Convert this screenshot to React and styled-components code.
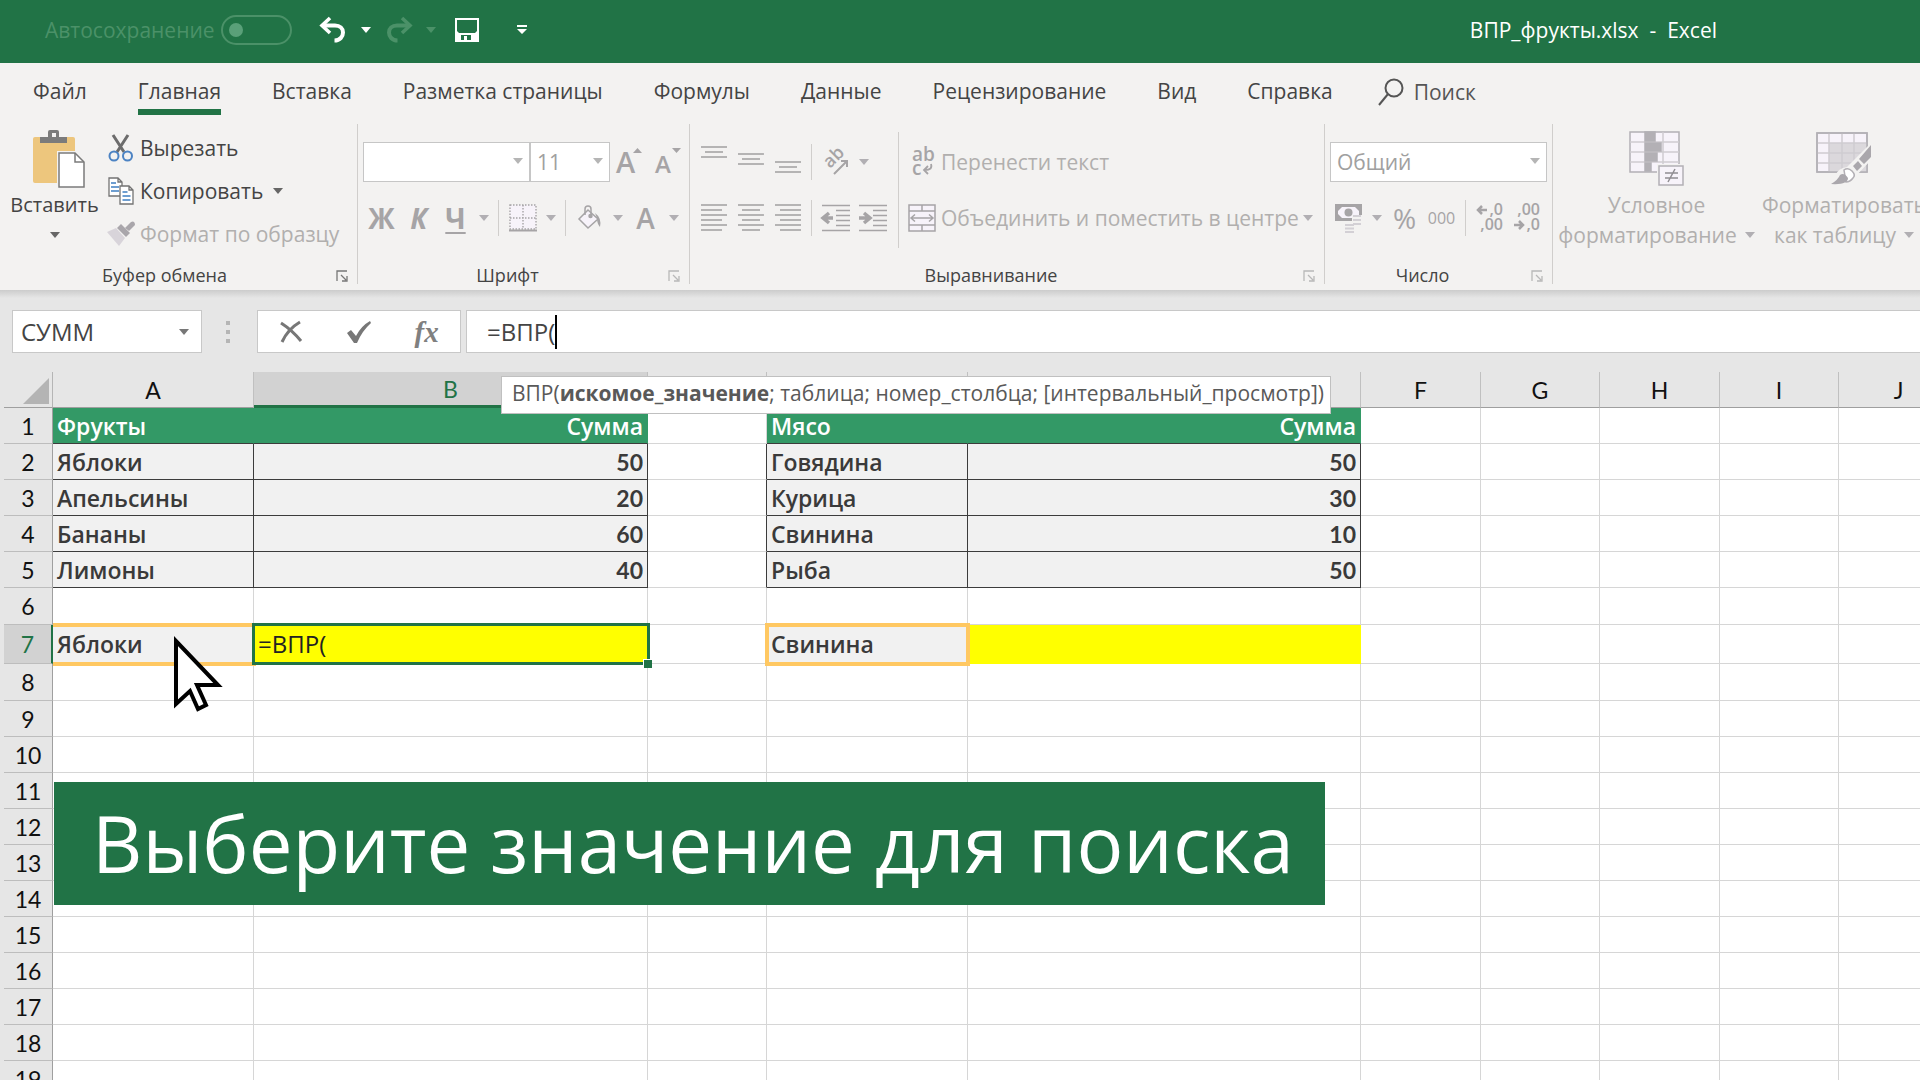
import React from 'react'
import styled, { createGlobalStyle, css } from 'styled-components'

const GlobalStyle = createGlobalStyle`
  * {
    box-sizing: border-box;
  }
  body {
    margin: 0;
    overflow: hidden;
    font-family: "Open Sans", "Noto Sans", sans-serif;
    color: #444444;
  }
  button, input, select {
    font: inherit;
    color: inherit;
    margin: 0;
    padding: 0;
    border: 0;
    background: none;
    border-radius: 0;
    opacity: 1;
  }
  svg {
    display: block;
    flex: none;
    overflow: visible;
  }
`

const GREEN = '#217346'
const OFF = '#a6a4a6'

/* ---------- icons ---------- */

const Caret = ({ color = '#666666' }) => (
  <svg width="10" height="6" viewBox="0 0 10 6" aria-hidden="true"><path d="M0 0h10L5 6z" fill={color} /></svg>
)

const UndoIcon = ({ flip, color }) => (
  <svg width="28" height="26" viewBox="0 0 28 26" fill="none" stroke={color} strokeWidth="4">
    <g transform={flip ? 'translate(28 0) scale(-1 1)' : undefined}>
      <path d="M11 1L3 8.500l8 7.500" strokeWidth="3.600" />
      <path d="M3 8.500h13c5 0 8 3 8 7s-3 8-8.500 8" />
    </g>
  </svg>
)

const SaveIcon = () => (
  <svg width="24" height="25" viewBox="0 0 24 25">
    <path d="M0 1h24v24H0z M2 3v11l2 2h16l2-2V3z M6 18v5h3v-4h3v4h4v-5z" fill="#fff" fillRule="evenodd" />
  </svg>
)

const CustomizeIcon = () => (
  <svg width="10" height="9" viewBox="0 0 10 9" fill="#fff"><path d="M0 0h10v2H0zM0 4h10L5 9z" /></svg>
)

const SearchIcon = () => (
  <svg width="26" height="28" viewBox="0 0 26 28" fill="none" stroke="#555" strokeWidth="2">
    <circle cx="16" cy="10" r="8.500" /><path d="M10 16L1 27" />
  </svg>
)

const PasteIcon = () => (
  <svg width="60" height="58" viewBox="-8 0 60 58">
    <rect x="0" y="7" width="42" height="46" rx="2" fill="#edc67d" />
    <path d="M7 13V7h8V2q0-2 2-2h7q2 0 2 2v5h8v6z" fill="#7b7b7b" />
    <rect x="19" y="3" width="4" height="4" fill="#f3f2f1" />
    <path d="M24 21h20l9 9v28H24z" fill="#f3f2f1" />
    <path d="M26 23h16l9 9v25H26z" fill="#fff" stroke="#7b7b7b" strokeWidth="1.500" />
    <path d="M42 23v9h9" fill="none" stroke="#7b7b7b" strokeWidth="1.500" />
  </svg>
)

const CutIcon = () => (
  <svg width="26" height="28" viewBox="0 0 26 28" fill="none">
    <path d="M5 1l11 17M20 1L9 18" stroke="#6c6c6c" strokeWidth="3" />
    <circle cx="6" cy="22" r="4.500" stroke="#4c83c3" strokeWidth="2" />
    <circle cx="19.500" cy="22" r="4.500" stroke="#4c83c3" strokeWidth="2" />
  </svg>
)

const CopyIcon = () => (
  <svg width="26" height="28" viewBox="0 0 26 28" fill="#fff" stroke="#737373" strokeWidth="1.300">
    <path d="M1 1h9l4 4v14H1zM10 1v4h4" />
    <path d="M3 6h5M3 10h8M3 14h8" stroke="#3f7fc1" />
    <path d="M12 9h9l4 4v14H12zM21 9v4h4" />
    <path d="M14.500 15h5M14.500 19h8M14.500 23h8" stroke="#3f7fc1" />
  </svg>
)

const PainterIcon = () => (
  <svg width="28" height="26" viewBox="0 0 28 26">
    <path d="M0 11l9-4 9 10-6 8z" fill="#d8d4da" />
    <path d="M10 7l4-4 9 9-4 4z" fill="#a9a6ab" />
    <path d="M18 7l6-6q2-1 3 0t1 3l-6 6z" fill="#a9a6ab" />
  </svg>
)

const GrowFont = ({ down }) => (
  <svg width="30" height="34" viewBox="0 0 30 34" fill={OFF} fontWeight="600">
    <text x={down ? 4 : 2} y="28" fontSize={down ? 24 : 29}>A</text>
    <path d={down ? 'M21 3h9l-4.500 5z' : 'M19 8h9l-4.500-5z'} />
  </svg>
)

const BordersIcon = () => (
  <svg width="28" height="28" viewBox="0 0 28 28" fill="none" stroke={OFF} strokeWidth="1.400">
    <path d="M1 1h26v24H1z" fill="#f7f3fa" strokeDasharray="1.500 1.500" />
    <path d="M14 1v24M1 14h26" strokeDasharray="1.500 1.500" /><path d="M0 26.500h28" strokeWidth="2" />
  </svg>
)

const FillIcon = () => (
  <svg width="24" height="26" viewBox="0 0 24 26" fill="none" stroke={OFF} strokeWidth="1.500">
    <path d="M10 5l10 9-10 9-9-9z" fill="#f7f3fa" />
    <path d="M7 10V4q0-3 3-3t3 3v7" />
    <circle cx="12.500" cy="11" r="1.500" fill={OFF} />
    <path d="M17 8q7 5 5 14-3-3-3-9z" fill={OFF} stroke="none" />
  </svg>
)

const Lines = ({ rows, width = 26 }) => (
  <svg width={width} height="28" viewBox={`0 0 ${width} 28`} stroke={OFF} strokeWidth="1.600">
    {rows.map(([y, x1, x2]) => <path key={y} d={`M${x1} ${y}H${x2}`} />)}
  </svg>
)

const OrientIcon = () => (
  <svg width="28" height="28" viewBox="0 0 28 28" fill="none">
    <text x="0" y="0" transform="translate(8 21) rotate(-45)" fontSize="18" fontWeight="600" fill={OFF}>ab</text>
    <path d="M12 26L25 13M19 13h6v6" stroke={OFF} strokeWidth="2" />
  </svg>
)

const IndentIcon = ({ right }) => (
  <svg width="28" height="28" viewBox="0 0 28 28" stroke={OFF} strokeWidth="1.600" fill="none">
    <path d="M0 1.500h28M14 6.500h14M14 11.500h14M14 16.500h14M14 21.500h14M0 26.500h28" />
    <path d={right ? 'M0 14h9M5 9l6 5-6 5' : 'M11 14H3M7 9l-6 5 6 5'} strokeWidth="3.500" />
  </svg>
)

const WrapIcon = () => (
  <svg width="28" height="30" viewBox="0 0 28 30">
    <g fill={OFF} fontSize="19" fontWeight="600">
      <text x="4" y="14">ab</text><text x="4" y="28">c</text>
    </g>
    <path d="M23 17q2 6-6 6M20 19l-4 4 4 4" fill="none" stroke={OFF} strokeWidth="1.800" />
  </svg>
)

const MergeIcon = () => (
  <svg width="28" height="28" viewBox="0 0 28 28" fill="none" stroke={OFF} strokeWidth="1.500">
    <path d="M1 1h26v26H1z" fill="#f7f3fa" />
    <path d="M1 7h26M1 21h26M14 1v6M14 21v6M3 14h22M7 10.500L3 14l4 3.500M21 10.500l4 3.500-4 3.500" />
  </svg>
)

const MoneyIcon = () => (
  <svg width="30" height="30" viewBox="0 0 30 30">
    <path d="M1 1h27v17H1z" fill={OFF} />
    <path d="M4 4h21v11H4z" fill="#f7f3fa" />
    <circle cx="14.500" cy="9.500" r="4" fill={OFF} />
    <path d="M4 4h4l-4 4zM25 4h-4l4 4zM4 15h4l-4-4z" fill={OFF} />
    <path d="M18 12h10v12H18z" fill="#f3f2f1" />
    <path d="M19 13h8M19 17h8M19 21h8M11 22h9M11 25.500h9M11 29h9" stroke="#d3d0d5" strokeWidth="2" />
  </svg>
)

const DecimalIcon = ({ less }) => (
  <svg width="30" height="30" viewBox="0 0 30 30" fill={OFF} fontSize="16" fontWeight="600">
    <text x="28" y="12" textAnchor="end">{less ? ',00' : ',0'}</text>
    <text x="28" y="27" textAnchor="end">{less ? ',0' : ',00'}</text>
    <path
      d={less ? 'M2 22h9M7 18l4 4-4 4' : 'M12 7H3M7 3L3 7l4 4'}
      fill="none" stroke={OFF} strokeWidth="2.500"
    />
  </svg>
)

const LauncherIcon = ({ color }) => (
  <svg width="12" height="12" viewBox="0 0 12 12" fill="none" stroke={color} strokeWidth="1.300">
    <path d="M1 11V1h10M5 5l5 5M11 6v5H6" />
  </svg>
)

const ConditionalIcon = () => (
  <svg width="56" height="56" viewBox="0 0 56 56" fill="none" stroke="#b3b0b5" strokeWidth="1.500">
    <path d="M1 1h49v40H1z" fill="#f7f3fa" />
    <path d="M1 11h49M1 21h49M1 31h49M34 1v40" stroke="#cfccd1" />
    <path d="M16 1h10v9H16zM16 12h16v8H16zM16 22h12v8H16zM16 32h6v8h-6z" fill="#b3b0b5" />
    <path d="M28 33h28v23H28z" fill="#f3f2f1" stroke="none" />
    <path d="M30 35h24v19H30z" fill="#f7f3fa" />
    <path d="M36 42h13M36 47h13M46 38l-7 13" stroke="#908d92" />
  </svg>
)

const TableStyleIcon = () => (
  <svg width="56" height="54" viewBox="0 0 56 54" fill="none" stroke="#b3b0b5" strokeWidth="1.500">
    <path d="M1 1h50v39H1z" fill="#f7f3fa" />
    <path d="M13 11h38v29H13z" fill="#dbd8dc" stroke="none" />
    <path d="M1 11h50M1 21h50M1 31h50M13 1v39M26 1v39M38 1v39" stroke="#cfccd1" />
    <path d="M1 1h50v39H1z" />
    <path d="M56 10v17L38 46q-4 9-14 8H10q6-3 9-10 3-8 12-9z" fill="#f3f2f1" stroke="none" />
    <path d="M55 13v12l-7 7-5-5zM42 29l4 5-5 5-4-5z" fill="#aaa7ac" stroke="none" />
    <path d="M28 38q4-3 8 1t1 7q-3 4-7 4z" fill="#fff" />
    <path d="M15 52q7-4 9-9 4-3 8 3 0 7-17 6z" fill="#aaa7ac" stroke="none" />
  </svg>
)

const CursorIcon = () => (
  <svg width="52" height="80" viewBox="0 0 52 80">
    <path d="M3 7v63l14-13 8 18 8-4-9-20h21z" fill="#fff" stroke="#000" strokeWidth="4" />
  </svg>
)

/* ---------- title bar ---------- */

const Window = styled.div`
  height: 100vh;
  display: flex;
  flex-direction: column;
  overflow: hidden;
  background: #e6e6e6;
`

const TitleBar = styled.header`
  flex: none;
  height: 63px;
  padding: 0 203px 4px 45px;
  display: flex;
  align-items: center;
  background: ${GREEN};
  color: #ffffff;
  font-size: 21px;
`

const AutoSave = styled.label`
  display: flex;
  align-items: center;
  gap: 6px;
  color: #4b9168;
`

const Switch = styled.input`
  appearance: none;
  width: 71px;
  height: 30px;
  border: 2px solid #4b9168;
  border-radius: 15px;
  display: flex;
  align-items: center;
  &::before {
    content: '';
    width: 14px;
    height: 14px;
    margin-left: 6px;
    border-radius: 50%;
    background: #5aa079;
  }
`

const QuickButtons = styled.div`
  display: flex;
  align-items: center;
  margin-left: 22px;
`

const QuickButton = styled.button`
  display: flex;
  align-items: center;
  justify-content: center;
  width: ${p => p.$width}px;
  height: 36px;
`

const Title = styled.h1`
  margin: 0 0 0 auto;
  font-size: 21px;
  font-weight: 400;
  white-space: pre;
`

/* ---------- ribbon ---------- */

const Tabs = styled.nav`
  flex: none;
  height: 57px;
  padding-left: 33px;
  display: flex;
  align-items: flex-start;
  gap: 51px;
  background: #f3f2f1;
`

const Tab = styled.a`
  margin-top: 12px;
  height: 40px;
  line-height: 32px;
  font-size: 21px;
  color: #444444;
  text-decoration: none;
  white-space: nowrap;
  border-bottom: 6px solid ${p => (p.$active ? GREEN : 'transparent')};
`

const SearchTab = styled.button`
  display: flex;
  align-items: center;
  gap: 10px;
  margin-top: 15px;
  margin-left: -6px;
  font-size: 21px;
  color: #555555;
`

const Ribbon = styled.div`
  flex: none;
  display: flex;
  height: 170px;
  padding: 4px 0 6px;
  overflow: hidden;
  background: #f3f2f1;
`

const RibbonShadow = styled.div`
  flex: none;
  height: 8px;
  background: linear-gradient(#cccccc, #e6e6e6);
`

const Group = styled.section`
  flex: none;
  display: flex;
  flex-direction: column;
  width: ${p => p.$width}px;
  border-right: ${p => (p.$last ? 0 : '1px solid #d0cecc')};
`

const GroupBody = styled.div`
  flex: 1;
  display: flex;
  padding: ${p => p.$padding};
`

const GroupFooter = styled.div`
  position: relative;
  height: 20px;
  padding-right: ${p => p.$shift || 0}px;
  line-height: 22px;
  font-size: 18px;
  text-align: center;
  white-space: nowrap;
`

const Launcher = styled.button`
  position: absolute;
  right: 9px;
  top: 6px;
`

const Stack = styled.div`
  flex: none;
  display: flex;
  flex-direction: column;
  gap: ${p => p.$gap || 0}px;
`

const Row = styled.div`
  display: flex;
  align-items: center;
  height: 40px;
`

const Tool = styled.button`
  display: flex;
  align-items: center;
  justify-content: center;
  width: 37px;
  height: 36px;
  color: ${OFF};
  line-height: 32px;
  font-size: ${p => p.$size || 28}px;
  font-weight: ${p => p.$weight || 400};
  font-style: ${p => (p.$italic ? 'italic' : 'normal')};
  text-decoration: ${p => (p.$underline ? 'underline' : 'none')};
  text-decoration-thickness: 2px;
  text-underline-offset: 3px;
`

const DropTool = styled(Tool)`
  width: 19px;
`

const Divider = styled.span`
  flex: none;
  width: 1px;
  height: 36px;
  margin: 0 5px;
  background: #d0cecc;
`

const TallDivider = styled(Divider)`
  height: 116px;
  margin: -10px 9px 0 7px;
`

const TextTool = styled.button`
  display: flex;
  align-items: center;
  gap: 5px;
  height: 43px;
  font-size: 21px;
  white-space: nowrap;
  color: ${p => (p.$off ? '#b1afae' : '#444444')};
`

const IconSlot = styled.span`
  display: flex;
  justify-content: center;
  width: 28px;
`

const BigTool = styled.button`
  display: flex;
  flex-direction: column;
  align-items: center;
  width: ${p => p.$width}px;
  padding-top: 2px;
  font-size: ${p => (p.$off ? 21 : 20)}px;
  line-height: 30px;
  color: ${p => (p.$off ? '#b1afae' : '#444444')};
  white-space: nowrap;
`

const BigLabel = styled.span`
  display: flex;
  align-items: center;
  gap: 8px;
  height: 30px;
`

const BigIcon = styled.span`
  display: flex;
  align-items: center;
  height: 62px;
`

const SelectWrap = styled.span`
  position: relative;
  display: block;
  width: ${p => p.$width}px;
  svg {
    position: absolute;
    right: 7px;
    top: 16px;
    pointer-events: none;
  }
`

const Select = styled.select`
  appearance: none;
  width: 100%;
  height: 40px;
  padding-left: 6px;
  border: 1px solid #c6c6c6;
  background: #ffffff;
  color: #a0a0a0;
  font-size: 21px;
`

const DropDown = ({ label, width, value }) => (
  <SelectWrap $width={width}>
    <Select aria-label={label} defaultValue={value}><option>{value}</option></Select>
    <Caret color="#b5b5b5" />
  </SelectWrap>
)

const Drop = () => <DropTool aria-label="Ещё"><Caret color="#b1afb3" /></DropTool>

const Footer = ({ title, off, shift }) => (
  <GroupFooter $shift={shift}>
    {title}
    <Launcher aria-label={title}><LauncherIcon color={off ? '#b8b8b8' : '#777777'} /></Launcher>
  </GroupFooter>
)

/* ---------- formula bar ---------- */

const FormulaBar = styled.div`
  flex: none;
  display: flex;
  align-items: center;
  height: 74px;
  padding: 0 0 7px 12px;
  font-size: 24px;
`

const NameBox = styled.div`
  display: flex;
  align-items: center;
  width: 190px;
  height: 43px;
  padding: 0 12px 0 8px;
  border: 1px solid #c8c8c8;
  background: #ffffff;
  input {
    flex: 1;
    min-width: 0;
  }
`

const Grip = styled.span`
  display: flex;
  flex-direction: column;
  gap: 5px;
  margin: 0 27px 0 24px;
  i {
    width: 4px;
    height: 4px;
    background: #b5b5b5;
  }
`

const FormulaButtons = styled.div`
  display: flex;
  justify-content: space-around;
  align-items: center;
  width: 204px;
  height: 43px;
  border: 1px solid #c8c8c8;
  background: #ffffff;
`

const FxButton = styled.button`
  font-family: "Liberation Serif", serif;
  font-style: italic;
  font-weight: 700;
  font-size: 29px;
  line-height: 32px;
  color: #808080;
`

const FormulaField = styled.label`
  flex: 1;
  display: flex;
  align-items: center;
  height: 43px;
  margin-left: 5px;
  padding-left: 20px;
  border: 1px solid #c8c8c8;
  border-right: 0;
  background: #ffffff;
`

const FormulaInput = styled.input`
  field-sizing: content;
  outline: 0;
`

const TextCaret = styled.span`
  width: 2px;
  height: 34px;
  background: #000000;
`

/* ---------- sheet ---------- */

const Sheet = styled.main`
  flex: 1;
  position: relative;
  min-height: 0;
  padding-left: 4px;
  overflow: hidden;
`

const Table = styled.table`
  table-layout: fixed;
  width: 1955px;
  border-spacing: 0;
  font-family: Lato, "Open Sans", sans-serif;
  font-size: 23px;
  line-height: 30px;
  color: #111111;
  th, td {
    position: relative;
    padding: 0;
    white-space: nowrap;
  }
`

const ColHead = styled.th`
  height: 36px;
  font-weight: 400;
  color: ${p => (p.$active ? GREEN : '#111111')};
  background: ${p => (p.$active ? '#d2d2d2' : '#e6e6e6')};
  border-right: 1px solid #c0c0c0;
  border-bottom: ${p => (p.$active ? `3px solid ${GREEN}` : '1px solid #9f9f9f')};
`

const Corner = styled.th`
  border-right: 1px solid #b5b5b5;
  border-bottom: 1px solid #9f9f9f;
  svg {
    margin: 2px 0 0 19px;
  }
`

const RowHead = styled.th`
  height: ${p => p.$height}px;
  font-weight: 400;
  color: ${p => (p.$active ? GREEN : '#111111')};
  background: ${p => (p.$active ? '#d2d2d2' : '#e6e6e6')};
  border-right: ${p => (p.$active ? `2px solid ${GREEN}` : '1px solid #9f9f9f')};
  border-bottom: 1px solid #bdbdbd;
`

const kinds = {
  head: css`
    background: #339966;
    color: #ffffff;
    border-color: #339966;
    border-bottom-color: #3c3c3c;
  `,
  data: css`
    background: #f1f1f1;
    color: #3a3a3a;
    border-color: #3c3c3c;
  `,
  lookup: css`
    background: #f1f1f1;
    color: #3a3a3a;
    z-index: 1;
    &::after {
      content: '';
      position: absolute;
      inset: -2px -3px -3px -2px;
      border: 4px solid #ffc862;
    }
    &:nth-child(2)::after {
      left: 0;
      border-left: 0;
    }
  `,
  fill: css`
    background: #ffff00;
    border-color: #ffff00;
  `,
  edit: css`
    background: #ffff00;
    font-size: 24px;
    font-weight: 400;
    color: #222222;
    z-index: 2;
    &::after {
      content: '';
      position: absolute;
      inset: -2px -3px -2px -2px;
      border: 3px solid ${GREEN};
    }
  `,
}

const Cell = styled.td`
  background: #ffffff;
  border-right: 1px solid #d6d6d6;
  border-bottom: 1px solid #d6d6d6;
  font-family: ${p => (p.$number ? 'Lato, sans-serif' : '"Open Sans", sans-serif')};
  font-size: 23px;
  font-weight: ${p => (p.$number ? 700 : 600)};
  text-align: ${p => (p.$right ? 'right' : 'left')};
  && {
    padding: 0 4px;
  }
  ${p => kinds[p.$kind]}
  ${p => p.$edge && css`border-right-color: #3c3c3c;`}
`

const FillHandle = styled.span`
  position: absolute;
  right: -5px;
  bottom: -5px;
  z-index: 2;
  width: 9px;
  height: 9px;
  border: solid #ffffff;
  border-width: 1px 0 0 1px;
  background: ${GREEN};
`

const Hint = styled.div`
  position: absolute;
  left: 501px;
  top: 4px;
  z-index: 3;
  height: 38px;
  padding: 0 6px 0 10px;
  line-height: 32px;
  font-size: 21px;
  white-space: nowrap;
  color: #595959;
  background: #ffffff;
  border: 1px solid #c0c0c0;
`

const Banner = styled.p`
  position: absolute;
  left: 54px;
  top: 410px;
  z-index: 3;
  margin: 0;
  padding: 0 31px 0 38px;
  font-size: 78px;
  line-height: 123px;
  white-space: nowrap;
  color: #ffffff;
  background: ${GREEN};
`

const Pointer = styled.span`
  position: absolute;
  left: 173px;
  top: 262px;
  z-index: 4;
`

const TABS = ['Файл', 'Главная', 'Вставка', 'Разметка страницы', 'Формулы', 'Данные', 'Рецензирование', 'Вид', 'Справка']
const COLUMNS = ['A', 'B', 'C', 'D', 'E', 'F', 'G', 'H', 'I', 'J']
const WIDTHS = [49, 201, 394, 119, 201, 393, 120, 119, 120, 119, 120]
const HEIGHTS = { 6: 37, 7: 39, 8: 37 }

const fruits = [['Фрукты', 'Сумма'], ['Яблоки', 50], ['Апельсины', 20], ['Бананы', 60], ['Лимоны', 40]]
const meat = [['Мясо', 'Сумма'], ['Говядина', 50], ['Курица', 30], ['Свинина', 10], ['Рыба', 50]]

const cells = {
  A7: { value: 'Яблоки', kind: 'lookup' },
  B7: { value: '=ВПР(', kind: 'edit' },
  D7: { value: 'Свинина', kind: 'lookup' },
  E7: { kind: 'fill' },
}

const addTable = (rows, left, right) => rows.forEach(([name, sum], i) => {
  const kind = i === 0 ? 'head' : 'data'
  cells[`${left}${i + 1}`] = { value: name, kind }
  cells[`${right}${i + 1}`] = { value: sum, kind, right: true }
})
addTable(fruits, 'A', 'B')
addTable(meat, 'D', 'E')
for (let i = 2; i < 6; i++) cells[`C${i}`] = { edge: true }

const Spreadsheet = () => (
  <Table>
    <colgroup>{WIDTHS.map((w, i) => <col key={i} width={w} />)}</colgroup>
    <thead>
      <tr>
        <Corner aria-label="Выделить всё">
          <svg width="26" height="26" viewBox="0 0 26 26"><path d="M26 0v26H0z" fill="#b4b4b4" /></svg>
        </Corner>
        {COLUMNS.map(c => <ColHead key={c} scope="col" $active={c === 'B'}>{c}</ColHead>)}
      </tr>
    </thead>
    <tbody>
      {Array.from({ length: 19 }, (_, i) => i + 1).map(row => (
        <tr key={row}>
          <RowHead scope="row" $height={HEIGHTS[row] || 36} $active={row === 7}>{row}</RowHead>
          {COLUMNS.map(c => {
            const cell = cells[`${c}${row}`] || {}
            return (
              <Cell
                key={c}
                $kind={cell.kind}
                $right={cell.right}
                $edge={cell.edge}
                $number={typeof cell.value === 'number'}
              >
                {cell.value}
                {cell.kind === 'edit' && <FillHandle />}
              </Cell>
            )
          })}
        </tr>
      ))}
    </tbody>
  </Table>
)

const App = () => (
  <Window>
    <GlobalStyle />
    <TitleBar>
      <AutoSave>Автосохранение<Switch type="checkbox" role="switch" /></AutoSave>
      <QuickButtons>
        <QuickButton $width={38} aria-label="Отменить"><UndoIcon color="#ffffff" /></QuickButton>
        <QuickButton $width={28} aria-label="Список отмены"><Caret color="#ffffff" /></QuickButton>
        <QuickButton $width={38} aria-label="Вернуть"><UndoIcon flip color="#4b9168" /></QuickButton>
        <QuickButton $width={26} aria-label="Список возврата"><Caret color="#4b9168" /></QuickButton>
        <QuickButton $width={46} aria-label="Сохранить"><SaveIcon /></QuickButton>
        <QuickButton $width={64} aria-label="Настройка панели"><CustomizeIcon /></QuickButton>
      </QuickButtons>
      <Title>{'ВПР_фрукты.xlsx  -  Excel'}</Title>
    </TitleBar>

    <Tabs>
      {TABS.map(t => <Tab key={t} href="#" $active={t === 'Главная'}>{t}</Tab>)}
      <SearchTab><SearchIcon />Поиск</SearchTab>
    </Tabs>

    <Ribbon>
      <Group $width={358}>
        <GroupBody $padding="2px 0 0 2px">
          <BigTool $width={105}>
            <BigIcon><PasteIcon /></BigIcon>
            Вставить
            <BigLabel><Caret /></BigLabel>
          </BigTool>
          <Stack>
            <TextTool><IconSlot><CutIcon /></IconSlot>Вырезать</TextTool>
            <TextTool><IconSlot><CopyIcon /></IconSlot>Копировать<DropTool as="span"><Caret /></DropTool></TextTool>
            <TextTool $off><IconSlot><PainterIcon /></IconSlot>Формат по образцу</TextTool>
          </Stack>
        </GroupBody>
        <Footer title="Буфер обмена" shift={28} />
      </Group>

      <Group $width={332}>
        <GroupBody $padding="18px 0 0 5px">
          <Stack $gap={16}>
            <Row>
              <DropDown label="Шрифт" width={167} value="" />
              <DropDown label="Размер шрифта" width={80} value="11" />
              <Tool aria-label="Увеличить размер"><GrowFont /></Tool>
              <Tool aria-label="Уменьшить размер"><GrowFont down /></Tool>
            </Row>
            <Row>
              <Tool $weight={700}>Ж</Tool>
              <Tool $weight={700} $italic>К</Tool>
              <Tool $weight={700} $underline>Ч</Tool>
              <Drop />
              <Divider />
              <Tool aria-label="Границы"><BordersIcon /></Tool>
              <Drop />
              <Divider />
              <Tool aria-label="Цвет заливки"><FillIcon /></Tool>
              <Drop />
              <Tool $weight={600}>A</Tool>
              <Drop />
            </Row>
          </Stack>
        </GroupBody>
        <Footer title="Шрифт" off shift={32} />
      </Group>

      <Group $width={635}>
        <GroupBody $padding="18px 0 0 5px">
          <Stack $gap={16}>
            <Row>
              <Tool aria-label="По верхнему краю"><Lines rows={[[-1, 0, 26], [4, 4, 22], [9, 0, 26]]} /></Tool>
              <Tool aria-label="По середине"><Lines rows={[[6, 0, 26], [11, 4, 22], [16, 0, 26]]} /></Tool>
              <Tool aria-label="По нижнему краю"><Lines rows={[[14, 0, 26], [19, 4, 22], [24, 0, 26]]} /></Tool>
              <Divider />
              <Tool aria-label="Ориентация"><OrientIcon /></Tool>
              <Drop />
            </Row>
            <Row>
              <Tool aria-label="По левому краю">
                <Lines rows={[[1, 0, 26], [6, 0, 21], [11, 0, 26], [16, 0, 21], [21, 0, 26], [26, 0, 21]]} />
              </Tool>
              <Tool aria-label="По центру">
                <Lines rows={[[1, 0, 26], [6, 4, 22], [11, 0, 26], [16, 4, 22], [21, 0, 26], [26, 4, 22]]} />
              </Tool>
              <Tool aria-label="По правому краю">
                <Lines rows={[[1, 0, 26], [6, 5, 26], [11, 0, 26], [16, 5, 26], [21, 0, 26], [26, 5, 26]]} />
              </Tool>
              <Divider />
              <Tool aria-label="Уменьшить отступ"><IndentIcon /></Tool>
              <Tool aria-label="Увеличить отступ"><IndentIcon right /></Tool>
            </Row>
          </Stack>
          <TallDivider />
          <Stack $gap={16}>
            <Row><TextTool $off><WrapIcon />Перенести текст</TextTool></Row>
            <Row>
              <TextTool $off><MergeIcon />Объединить и поместить в центре</TextTool>
              <Drop />
            </Row>
          </Stack>
        </GroupBody>
        <Footer title="Выравнивание" off shift={32} />
      </Group>

      <Group $width={228}>
        <GroupBody $padding="18px 0 0 5px">
          <Stack $gap={16}>
            <Row><DropDown label="Числовой формат" width={217} value="Общий" /></Row>
            <Row>
              <Tool aria-label="Финансовый формат"><MoneyIcon /></Tool>
              <Drop />
              <Tool>%</Tool>
              <Tool $size={16}>000</Tool>
              <Divider />
              <Tool aria-label="Увеличить разрядность"><DecimalIcon /></Tool>
              <Tool aria-label="Уменьшить разрядность"><DecimalIcon less /></Tool>
            </Row>
          </Stack>
        </GroupBody>
        <Footer title="Число" off shift={32} />
      </Group>

      <Group $width={400} $last>
        <GroupBody $padding="2px 0 0 5px">
          <BigTool $off $width={197}>
            <BigIcon><ConditionalIcon /></BigIcon>
            Условное
            <BigLabel>форматирование<Caret color="#b1afb3" /></BigLabel>
          </BigTool>
          <BigTool $off $width={178}>
            <BigIcon><TableStyleIcon /></BigIcon>
            Форматировать
            <BigLabel>как таблицу<Caret color="#b1afb3" /></BigLabel>
          </BigTool>
        </GroupBody>
      </Group>
    </Ribbon>
    <RibbonShadow />

    <FormulaBar>
      <NameBox>
        <input aria-label="Имя" defaultValue="СУММ" />
        <button aria-label="Список имён"><Caret color="#777777" /></button>
      </NameBox>
      <Grip><i /><i /><i /></Grip>
      <FormulaButtons>
        <button aria-label="Отмена">
          <svg width="24" height="24" viewBox="0 0 24 24" fill="none" stroke="#777" strokeWidth="3">
            <path d="M2 3q11 7 20 18M21 2Q9 9 3 22" />
          </svg>
        </button>
        <button aria-label="Ввод">
          <svg width="26" height="24" viewBox="0 0 26 24"><path d="M1 13l4-3 5 6Q15 6 24 1l1 2Q16 11 11 23H8z" fill="#777" /></svg>
        </button>
        <FxButton>fx</FxButton>
      </FormulaButtons>
      <FormulaField>
        <FormulaInput aria-label="Строка формул" defaultValue="=ВПР(" />
        <TextCaret />
      </FormulaField>
    </FormulaBar>

    <Sheet>
      <Spreadsheet />
      <Hint>ВПР(<b>искомое_значение</b>; таблица; номер_столбца; [интервальный_просмотр])</Hint>
      <Banner>Выберите значение для поиска</Banner>
      <Pointer><CursorIcon /></Pointer>
    </Sheet>
  </Window>
)

export default App
